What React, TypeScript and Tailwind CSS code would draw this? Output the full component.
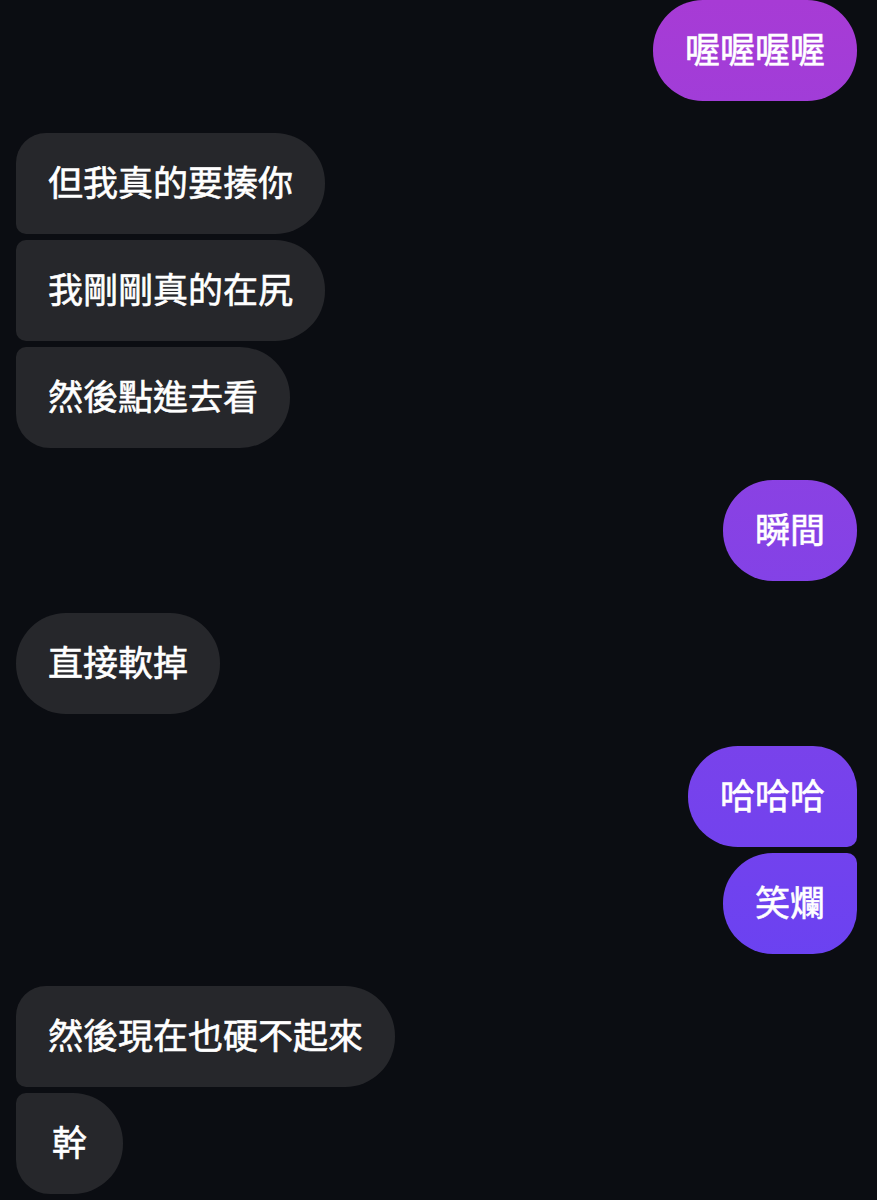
import React from "react";

type Pos = "single" | "first" | "middle" | "last";

const received: Record<Pos, string> = {
  single: "rounded-[50px]",
  first: "rounded-tl-[30px] rounded-bl-[10px] rounded-r-[50px]",
  middle: "rounded-l-[10px] rounded-r-[50px]",
  last: "rounded-tl-[10px] rounded-bl-[34px] rounded-r-[50px]",
};

const sent: Record<Pos, string> = {
  single: "rounded-[50px]",
  first: "rounded-tr-[44px] rounded-br-[10px] rounded-l-[50px]",
  middle: "rounded-r-[10px] rounded-l-[50px]",
  last: "rounded-tr-[10px] rounded-br-[44px] rounded-l-[50px]",
};

type Group = { mine: boolean; lines: string[] };

const groups: Group[] = [
  { mine: true, lines: ["喔喔喔喔"] },
  { mine: false, lines: ["但我真的要揍你", "我剛剛真的在尻", "然後點進去看"] },
  { mine: true, lines: ["瞬間"] },
  { mine: false, lines: ["直接軟掉"] },
  { mine: true, lines: ["哈哈哈", "笑爛"] },
  { mine: false, lines: ["然後現在也硬不起來", "幹"] },
];

function posOf(i: number, n: number): Pos {
  if (n === 1) return "single";
  if (i === 0) return "first";
  if (i === n - 1) return "last";
  return "middle";
}

function Bubble({ text, mine, pos }: { text: string; mine: boolean; pos: Pos }) {
  return (
    <div
      className={`h-[101px] min-w-[107px] flex items-center justify-center px-[32px] pb-[6px] text-[35px] leading-none text-white font-normal [-webkit-text-stroke:0.6px_#fff] ${
        mine
          ? `bg-fixed bg-linear-to-b from-[#a73bd5] to-[#5a40f8] ${sent[pos]}`
          : `bg-[#26272b] ${received[pos]}`
      }`}
    >
      {text}
    </div>
  );
}

export default function App() {
  return (
    <div
      className="min-h-[1200px] w-full bg-[#0b0d12] pl-4 pr-5 flex flex-col gap-[32px]"
      style={{ fontFamily: '"Noto Sans CJK TC", "Noto Sans", sans-serif' }}
    >
      {groups.map((g, gi) => (
        <div
          key={gi}
          className={`flex flex-col gap-[6px] ${g.mine ? "items-end" : "items-start"}`}
        >
          {g.lines.map((line, i) => (
            <Bubble key={i} text={line} mine={g.mine} pos={posOf(i, g.lines.length)} />
          ))}
        </div>
      ))}
    </div>
  );
}
